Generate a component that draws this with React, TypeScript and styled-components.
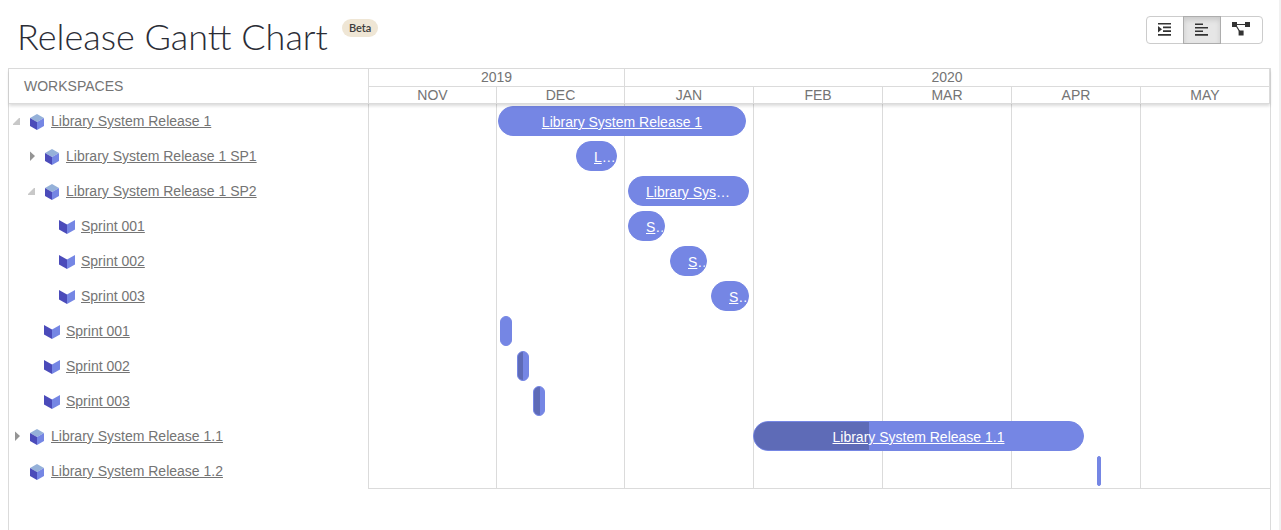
import React, { useState } from "react";
import styled, { createGlobalStyle } from "styled-components";

const GlobalStyle = createGlobalStyle`
  *, *::before, *::after { box-sizing: border-box; }
  body {
    margin: 0;
    background: #fff;
    color: #747474;
    font: 14px/20px "Liberation Sans", Arial, sans-serif;
  }
`;

const line = "#dbdbdb";
const rowHeight = 35;

const Page = styled.main`
  display: flex;
  flex-direction: column;
  min-height: 100vh;
  padding: 0 8px;
  border-right: 2px solid #f1f1f1;
`;

const TopBar = styled.header`
  display: flex;
  justify-content: space-between;
  align-items: flex-start;
  height: 68px;
  padding: 16px 8px 0 9px;
`;

const Heading = styled.div`
  display: flex;
  align-items: flex-start;
  gap: 14px;
`;

const Title = styled.h1`
  margin: 0;
  color: #2b2d36;
  font: 300 36px/40px Lato, sans-serif;
`;

const Badge = styled.span`
  margin-top: 3px;
  padding: 0 7px;
  border-radius: 9px;
  background: #efe6d5;
  color: #3c3c3c;
  font: 600 11px/18px Lato, sans-serif;
`;

const ButtonGroup = styled.div`
  display: flex;
`;

const ViewButton = styled.button<{ $active: boolean }>`
  display: flex;
  justify-content: center;
  align-items: center;
  height: 28px;
  margin: 0 0 0 -1px;
  padding: 0 12px 2px 11px;
  border: 1px solid ${(p) => (p.$active ? "#adadad" : "#ccc")};
  background: ${(p) => (p.$active ? "#e6e6e6" : "#fff")};
  box-shadow: ${(p) => (p.$active ? "inset 0 3px 5px rgba(0, 0, 0, 0.12)" : "none")};
  z-index: ${(p) => (p.$active ? 1 : 0)};
  color: #333;
  cursor: pointer;
  &:first-child { border-radius: 4px 0 0 4px; }
  &:last-child { border-radius: 0 4px 4px 0; }
`;

const Frame = styled.section`
  flex: 1;
  border: 1px solid ${line};
  border-bottom: 0;
`;

const Split = styled.div`
  display: grid;
  grid-template-columns: 360px minmax(0, 1fr);
`;

const HeadRow = styled(Split)`
  height: 35px;
  border-bottom: 1px solid ${line};
  box-shadow: 0 2px 3px rgba(0, 0, 0, 0.14);
  position: relative;
  z-index: 2;
`;

const PanelTitle = styled.div`
  padding-left: 15px;
  border-right: 1px solid ${line};
  line-height: 34px;
`;

const months = [
  { name: "NOV", units: 128 },
  { name: "DEC", units: 128 },
  { name: "JAN", units: 129 },
  { name: "FEB", units: 129 },
  { name: "MAR", units: 129 },
  { name: "APR", units: 129 },
  { name: "MAY", units: 129 },
];
const monthTracks = months.map((m) => `${m.units}fr`).join(" ");

const Scale = styled.div`
  display: grid;
  grid-template-columns: ${monthTracks};
  grid-template-rows: 18px 16px;
`;

const ScaleCell = styled.div<{ $span?: number }>`
  grid-column: span ${(p) => p.$span ?? 1};
  border-right: 1px solid ${line};
  border-bottom: ${(p) => (p.$span ? `1px solid ${line}` : "0")};
  text-align: center;
  line-height: 17px;
`;

const Tree = styled.ul`
  margin: 0;
  padding: 0;
  list-style: none;
  border-right: 1px solid ${line};
`;

const TreeRow = styled.li<{ $level: number }>`
  display: flex;
  align-items: center;
  height: ${rowHeight}px;
  padding-left: ${(p) => p.$level * 15}px;
`;

const Toggle = styled.button`
  display: flex;
  width: 16px;
  height: 16px;
  margin: 0 4px 1px 0;
  padding: 0;
  border: 0;
  background: none;
  cursor: pointer;
`;

const ToggleSpace = styled.span`
  width: 16px;
  margin-right: 4px;
`;

const KindIcon = styled.svg`
  width: 16px;
  height: 16px;
  margin-top: 1px;
`;

const TreeLink = styled.a`
  margin: 0 0 1px 6px;
  color: #747474;
`;

const Chart = styled.div`
  display: grid;
  border-bottom: 1px solid ${line};
`;

const GridLines = styled.div`
  grid-area: 1 / 1;
  display: grid;
  grid-template-columns: ${monthTracks};
`;

const GridLine = styled.div`
  border-right: 1px solid ${line};
  &:last-child { border-right: 0; }
`;

const Lanes = styled.div`
  grid-area: 1 / 1;
  height: ${rowHeight * 11 - 1}px;
  z-index: 1;
`;

const Lane = styled.div`
  height: ${rowHeight}px;
  padding-top: 2px;
`;

const Bar = styled.div`
  display: grid;
  height: 30px;
  border: 1px solid #7586e4;
  border-radius: 15px;
  background: #7586e4;
  overflow: hidden;
`;

const Progress = styled.div`
  grid-area: 1 / 1;
  background: #5e6bb7;
`;

const BarLabel = styled.div`
  grid-area: 1 / 1;
  z-index: 1;
  min-width: 0;
  padding: 0 17px;
  overflow: hidden;
  color: #fff;
  line-height: 30px;
  text-align: center;
  text-overflow: ellipsis;
  white-space: nowrap;
`;

const BarLink = styled.a`
  color: #fff;
`;

type Item = {
  name: string;
  level: number;
  kind: "release" | "sprint";
  open?: boolean;
  start: number;
  span: number;
  done?: number;
  label?: boolean;
};

const timelineUnits = 901;

const items: Item[] = [
  { name: "Library System Release 1", level: 0, kind: "release", open: true, start: 129, span: 248, label: true },
  { name: "Library System Release 1 SP1", level: 1, kind: "release", open: false, start: 207, span: 41, label: true },
  { name: "Library System Release 1 SP2", level: 1, kind: "release", open: true, start: 259, span: 121, label: true },
  { name: "Sprint 001", level: 2, kind: "sprint", start: 259, span: 37, label: true },
  { name: "Sprint 002", level: 2, kind: "sprint", start: 301, span: 37, label: true },
  { name: "Sprint 003", level: 2, kind: "sprint", start: 342, span: 38, label: true },
  { name: "Sprint 001", level: 1, kind: "sprint", start: 131, span: 12 },
  { name: "Sprint 002", level: 1, kind: "sprint", start: 148, span: 12, done: 50 },
  { name: "Sprint 003", level: 1, kind: "sprint", start: 164, span: 12, done: 60 },
  { name: "Library System Release 1.1", level: 0, kind: "release", open: false, start: 384, span: 331, done: 35, label: true },
  { name: "Library System Release 1.2", level: 0, kind: "release", start: 728, span: 4 },
];

const percent = (units: number) => `${(units / timelineUnits) * 100}%`;

const ReleaseIcon = () => (
  <KindIcon viewBox="0 0 16 16" aria-hidden="true">
    <path d="M8 0 15 4 8 8 1 4Z" fill="#95b1d9" />
    <path d="M1 4 8 8V16L1 12Z" fill="#4b4bba" />
    <path d="M15 4 8 8V16L15 12Z" fill="#7586e4" />
  </KindIcon>
);

const SprintIcon = () => (
  <KindIcon viewBox="0 0 16 16" aria-hidden="true">
    <path d="M0 1 8 5.5V15L0 10.5Z" fill="#4b4bba" />
    <path d="M16 1 8 5.5V15L16 10.5Z" fill="#7586e4" />
  </KindIcon>
);

const ToggleIcon = ({ open }: { open: boolean }) => (
  <svg width="16" height="16" viewBox="0 0 16 16" aria-hidden="true">
    {open ? <path d="M11 5V12H4V11L10 5Z" fill="#c8c8c8" /> : <path d="M6 3.5 11 8 6 13Z" fill="#949494" />}
  </svg>
);

const OutlineIcon = () => (
  <svg width="13" height="13" viewBox="0 0 13 13" fill="currentColor" aria-hidden="true">
    <path d="M0 0H13V1.4H0ZM5 3.4H13V5.2H5ZM5 7.2H13V9H5ZM0 11H13V12.8H0ZM0 3 4 6.2 0 9.4Z" />
  </svg>
);

const AlignIcon = () => (
  <svg width="13" height="13" viewBox="0 0 13 13" fill="currentColor" aria-hidden="true">
    <path d="M0 .4H8V2H0ZM0 4H13V5.6H0ZM0 7.4H8V9H0ZM0 11H13V12.8H0Z" />
  </svg>
);

const DiagramIcon = () => (
  <svg width="18" height="14" viewBox="0 0 18 14" fill="currentColor" aria-hidden="true">
    <path d="M0 0H5V5H0ZM13 0H18V5H13ZM6.6 8.4H11.6V13.4H6.6Z" />
    <path d="M4 2.5H14M4 3.5 8 10" fill="none" stroke="currentColor" strokeWidth="1.2" />
  </svg>
);

const views = [
  { name: "Outline", Icon: OutlineIcon },
  { name: "Gantt", Icon: AlignIcon },
  { name: "Dependencies", Icon: DiagramIcon },
];

export default function App() {
  const [view, setView] = useState("Gantt");
  return (
    <>
      <GlobalStyle />
      <Page>
        <TopBar>
          <Heading>
            <Title>Release Gantt Chart</Title>
            <Badge>Beta</Badge>
          </Heading>
          <ButtonGroup>
            {views.map(({ name, Icon }) => (
              <ViewButton
                key={name}
                type="button"
                aria-label={name}
                aria-pressed={view === name}
                $active={view === name}
                onClick={() => setView(name)}
              >
                <Icon />
              </ViewButton>
            ))}
          </ButtonGroup>
        </TopBar>
        <Frame>
          <HeadRow>
            <PanelTitle>WORKSPACES</PanelTitle>
            <Scale>
              <ScaleCell $span={2}>2019</ScaleCell>
              <ScaleCell $span={5}>2020</ScaleCell>
              {months.map((m) => (
                <ScaleCell key={m.name}>{m.name}</ScaleCell>
              ))}
            </Scale>
          </HeadRow>
          <Split>
            <Tree>
              {items.map((item, i) => (
                <TreeRow key={i} $level={item.level}>
                  {item.open === undefined ? (
                    <ToggleSpace />
                  ) : (
                    <Toggle type="button" aria-label={`Toggle ${item.name}`} aria-expanded={item.open}>
                      <ToggleIcon open={item.open} />
                    </Toggle>
                  )}
                  {item.kind === "release" ? <ReleaseIcon /> : <SprintIcon />}
                  <TreeLink href="#">{item.name}</TreeLink>
                </TreeRow>
              ))}
            </Tree>
            <Chart>
              <GridLines>
                {months.map((m) => (
                  <GridLine key={m.name} />
                ))}
              </GridLines>
              <Lanes>
                {items.map((item, i) => (
                  <Lane key={i}>
                    <Bar style={{ marginLeft: percent(item.start), width: percent(item.span) }}>
                      {item.done && <Progress style={{ width: `${item.done}%` }} />}
                      {item.label && (
                        <BarLabel>
                          <BarLink href="#">{item.name}</BarLink>
                        </BarLabel>
                      )}
                    </Bar>
                  </Lane>
                ))}
              </Lanes>
            </Chart>
          </Split>
        </Frame>
      </Page>
    </>
  );
}
